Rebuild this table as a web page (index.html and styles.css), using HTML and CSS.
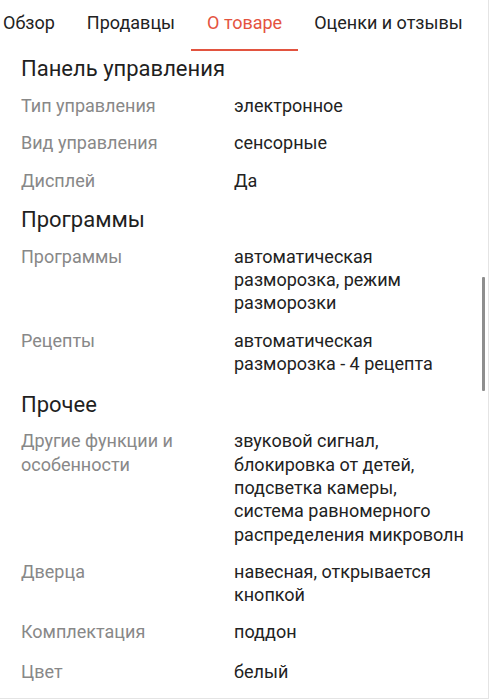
FILE: index.html
```html
<!DOCTYPE html>
<html lang="ru">
<head>
<meta charset="utf-8">
<link rel="stylesheet" href="styles.css">
</head>
<body>
<div class="screen">
  <nav class="tabs">
    <div class="tab first">Обзор</div>
    <div class="tab">Продавцы</div>
    <div class="tab active">О товаре</div>
    <div class="tab">Оценки и отзывы</div>
  </nav>
  <main class="content">
    <h2 class="section-title first">Панель управления</h2>
    <div class="row"><div class="label">Тип управления</div><div class="value">электронное</div></div>
    <div class="row"><div class="label">Вид управления</div><div class="value">сенсорные</div></div>
    <div class="row"><div class="label">Дисплей</div><div class="value">Да</div></div>

    <h2 class="section-title">Программы</h2>
    <div class="row"><div class="label">Программы</div><div class="value">автоматическая<br>разморозка, режим<br>разморозки</div></div>
    <div class="row"><div class="label">Рецепты</div><div class="value">автоматическая<br>разморозка - 4 рецепта</div></div>

    <h2 class="section-title third">Прочее</h2>
    <div class="row"><div class="label">Другие функции и<br>особенности</div><div class="value">звуковой сигнал,<br>блокировка от детей,<br>подсветка камеры,<br>система равномерного<br>распределения микроволн</div></div>
    <div class="row"><div class="label">Дверца</div><div class="value">навесная, открывается<br>кнопкой</div></div>
    <div class="row"><div class="label">Комплектация</div><div class="value">поддон</div></div>
    <div class="row last"><div class="label">Цвет</div><div class="value">белый</div></div>
  </main>
  <div class="scrollbar"></div>
</div>
</body>
</html>
```

FILE: styles.css
```css
* { box-sizing: border-box; margin: 0; padding: 0; }
html, body { width: 489px; height: 699px; overflow: hidden; background: #fff; }
body { font-family: Roboto, "Noto Sans", sans-serif; color: #222; }
.screen {
  position: relative;
  width: 489px;
  height: 699px;
  border-right: 1px solid #e4e4e4;
  border-bottom: 1px solid #e4e4e4;
  overflow: hidden;
}
.tabs {
  display: flex;
  height: 51px;
  white-space: nowrap;
}
.tab {
  padding: 0 16px;
  font-size: 18px;
  line-height: 46px;
  color: #222;
  border-bottom: 2px solid transparent;
  height: 51px;
}
.tab.first { margin-left: -13px; }
.tab.active {
  color: #e4533f;
  border-bottom: 2px solid #e2533f;
}
.content { padding: 0 0 0 21px; }
.section-title {
  font-size: 22px;
  font-weight: 400;
  line-height: 28px;
  padding: 7px 0 4px;
  color: #1f1f1f;
}
.section-title.first { padding-top: 4px; }
.section-title.third { padding-top: 9px; padding-bottom: 3px; }
.row {
  display: grid;
  grid-template-columns: 213px 1fr;
  padding: 7px 0;
  font-size: 18px;
  line-height: 23.3px;
  white-space: nowrap;
}
.row.last { padding-top: 9px; }
.label { color: #888; }
.value { color: #222; }
.scrollbar {
  position: absolute;
  left: 482px;
  top: 277px;
  width: 3px;
  height: 114px;
  background: #8e8e8e;
  border-radius: 1px;
}
```
